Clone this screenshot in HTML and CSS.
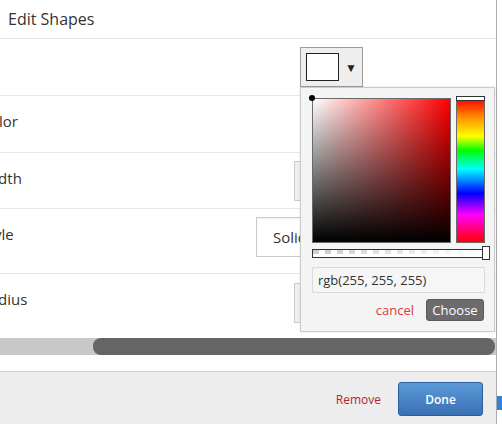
FILE: index.html
```html
<!DOCTYPE html>
<html lang="en">
  <head>
    <meta charset="UTF-8" />
    <title>Edit Shapes</title>
    <link rel="stylesheet" href="styles.css">
  </head>
  <body>
    <div class="dialog">
      <div class="dialog-header">Edit Shapes</div>

      <div class="dialog-body">
        <div class="form">
          <div class="row">
            <label class="row-label"></label>
            <div class="color-field">
              <div class="replacer">
                <span class="swatch"></span>
                <span class="dropdown">&#9660;</span>
              </div>
            </div>
          </div>
          <div class="row">
            <label class="row-label">Border Color</label>
          </div>
          <div class="row row-short">
            <label class="row-label">Border Width</label>
            <div class="num-input"></div>
          </div>
          <div class="row row-tall">
            <label class="row-label">Border Style</label>
            <div class="select">Solid</div>
          </div>
          <div class="row row-last">
            <label class="row-label">Border Radius</label>
            <div class="num-input"></div>
          </div>
        </div>
        <div class="hscroll"><div class="hscroll-thumb"></div></div>
      </div>

      <div class="dialog-footer">
        <a class="remove">Remove</a>
        <button class="done">Done</button>
      </div>

      <div class="picker">
        <div class="picker-top">
          <div class="sv"><span class="sv-dot"></span></div>
          <div class="hue"><span class="hue-handle"></span></div>
        </div>
        <div class="alpha"><span class="alpha-handle"></span></div>
        <div class="picker-input">rgb(255, 255, 255)</div>
        <div class="picker-buttons">
          <a class="cancel">cancel</a>
          <button class="choose">Choose</button>
        </div>
      </div>
    </div>

    <div class="backdrop"><div class="backdrop-bar"></div></div>
  </body>
</html>
```

FILE: styles.css
```css
body {
  margin: 0;
  height: 100vh;
  overflow: hidden;
  display: flex;
  background-color: #fff;
  color: #333;
  font-family: "Open Sans", sans-serif;
}

.dialog {
  position: relative;
  width: 496px;
  display: flex;
  flex-direction: column;
  border-right: 1px solid #a9a9a9;
  background-color: #fff;
}

.dialog-header {
  height: 38px;
  line-height: 38px;
  padding-left: 8px;
  font-size: 16px;
  border-bottom: 1px solid #e6e6e6;
}

.dialog-body {
  flex: 1;
  overflow: hidden;
}

.form {
  margin-left: -72px;
}

.row {
  display: flex;
  align-items: flex-start;
  box-sizing: border-box;
  height: 57px;
  padding: 8px 12px 0 0;
  border-bottom: 1px solid #e6e6e6;
}

.row-short {
  height: 56px;
}

.row-tall {
  height: 65px;
}

.row-last {
  height: 64px;
  padding-top: 9px;
  border-bottom: none;
}

.row-label {
  flex: 1;
  margin-top: 7px;
  font-size: 15px;
  line-height: 20px;
  white-space: nowrap;
}

.row-last .row-label {
  margin-top: 6px;
}

.color-field {
  width: 184px;
}

.replacer {
  display: inline-flex;
  align-items: center;
  box-sizing: border-box;
  width: 63px;
  height: 40px;
  padding: 5px;
  border: 1px solid #9d9d9d;
  background-color: #eee;
}

.swatch {
  box-sizing: border-box;
  width: 36px;
  height: 28px;
  border: 1px solid #222;
  background-color: #fff;
}

.dropdown {
  margin-left: 6px;
  font-size: 12px;
  color: #222;
}

.num-input {
  box-sizing: border-box;
  width: 190px;
  height: 40px;
  border: 1px solid #cacaca;
  background-color: #efefef;
}

.select {
  box-sizing: border-box;
  width: 228px;
  height: 40px;
  padding-left: 16px;
  line-height: 38px;
  font-size: 15px;
  border: 1px solid #cacaca;
  background-color: #fff;
  box-shadow: inset 0 1px 2px rgba(0, 0, 0, 0.06);
}

.hscroll {
  height: 17px;
  background-color: #c8c8cb;
}

.hscroll-thumb {
  margin-left: 93px;
  width: 402px;
  height: 100%;
  border-radius: 8px;
  background-color: #646567;
}

.dialog-footer {
  box-sizing: border-box;
  height: 53px;
  padding: 2px 13px 0 0;
  display: flex;
  justify-content: flex-end;
  align-items: center;
  gap: 17px;
  border-top: 1px solid #cfcfcf;
  background-color: #ededed;
}

.remove {
  color: #b8262a;
  font-size: 12px;
}

.done {
  width: 85px;
  height: 34px;
  border: 1px solid #2c5f9f;
  border-radius: 3px;
  background: linear-gradient(#5b9ad9, #3a70b3);
  color: #fff;
  font-family: "Open Sans", sans-serif;
  font-size: 12px;
  font-weight: 600;
}

/* colour picker popup */
.picker {
  position: absolute;
  left: 300px;
  top: 87px;
  width: 173px;
  padding: 10px 9px 10px 11px;
  border: 1px solid #cbcbcb;
  background-color: #f4f4f4;
  box-shadow: 0 0 2px rgba(0, 0, 0, 0.12);
}

.picker-top {
  display: flex;
  gap: 5px;
  height: 145px;
}

.sv {
  position: relative;
  box-sizing: border-box;
  width: 139px;
  border: 1px solid #6a6a6a;
  background: linear-gradient(to top, #000, rgba(0, 0, 0, 0)),
    linear-gradient(to right, #fff, rgba(255, 255, 255, 0)), #f00;
}

.sv-dot {
  position: absolute;
  left: -4px;
  top: -4px;
  width: 6px;
  height: 6px;
  border-radius: 50%;
  background-color: #000;
}

.hue {
  position: relative;
  box-sizing: border-box;
  width: 29px;
  border: 1px solid #6a6a6a;
  background: linear-gradient(
    to bottom,
    #f00 0%,
    #f80 12%,
    #ff0 26%,
    #0f0 36%,
    #0ff 49%,
    #00f 66%,
    #f0f 81%,
    #f00 100%
  );
}

.hue-handle {
  position: absolute;
  left: -1px;
  top: -3px;
  box-sizing: border-box;
  width: 29px;
  height: 5px;
  border: 1px solid #333;
  background-color: #fff;
}

.alpha {
  position: relative;
  box-sizing: border-box;
  height: 9px;
  margin-top: 6px;
  border: 1px solid #333;
  background: linear-gradient(to right, rgba(255, 255, 255, 0), #fff),
    repeating-linear-gradient(to right, #ccc 0 6px, #fff 6px 12px) 0 0 / 100% 4px no-repeat,
    #fff;
}

.alpha-handle {
  position: absolute;
  right: -6px;
  top: -4px;
  box-sizing: border-box;
  width: 8px;
  height: 14px;
  border: 1px solid #333;
  background-color: #fff;
}

.picker-input {
  box-sizing: border-box;
  height: 26px;
  margin-top: 9px;
  padding-left: 5px;
  line-height: 24px;
  font-size: 13px;
  border: 1px solid #dadada;
  border-radius: 2px;
  background-color: #f6f6f6;
}

.picker-buttons {
  display: flex;
  justify-content: flex-end;
  align-items: center;
  gap: 12px;
  margin-top: 6px;
  padding-right: 1px;
}

.cancel {
  color: #d63c3c;
  font-size: 13px;
}

.choose {
  width: 58px;
  height: 22px;
  padding: 0;
  border: 1px solid #5a5a5a;
  border-radius: 3px;
  background-color: #6d6b6d;
  color: #fff;
  font-family: "Open Sans", sans-serif;
  font-size: 13px;
}

.backdrop {
  flex: 1;
  display: flex;
  flex-direction: column;
  justify-content: flex-end;
  padding-bottom: 14px;
}

.backdrop-bar {
  height: 14px;
  background-color: #2a84e0;
}
```
